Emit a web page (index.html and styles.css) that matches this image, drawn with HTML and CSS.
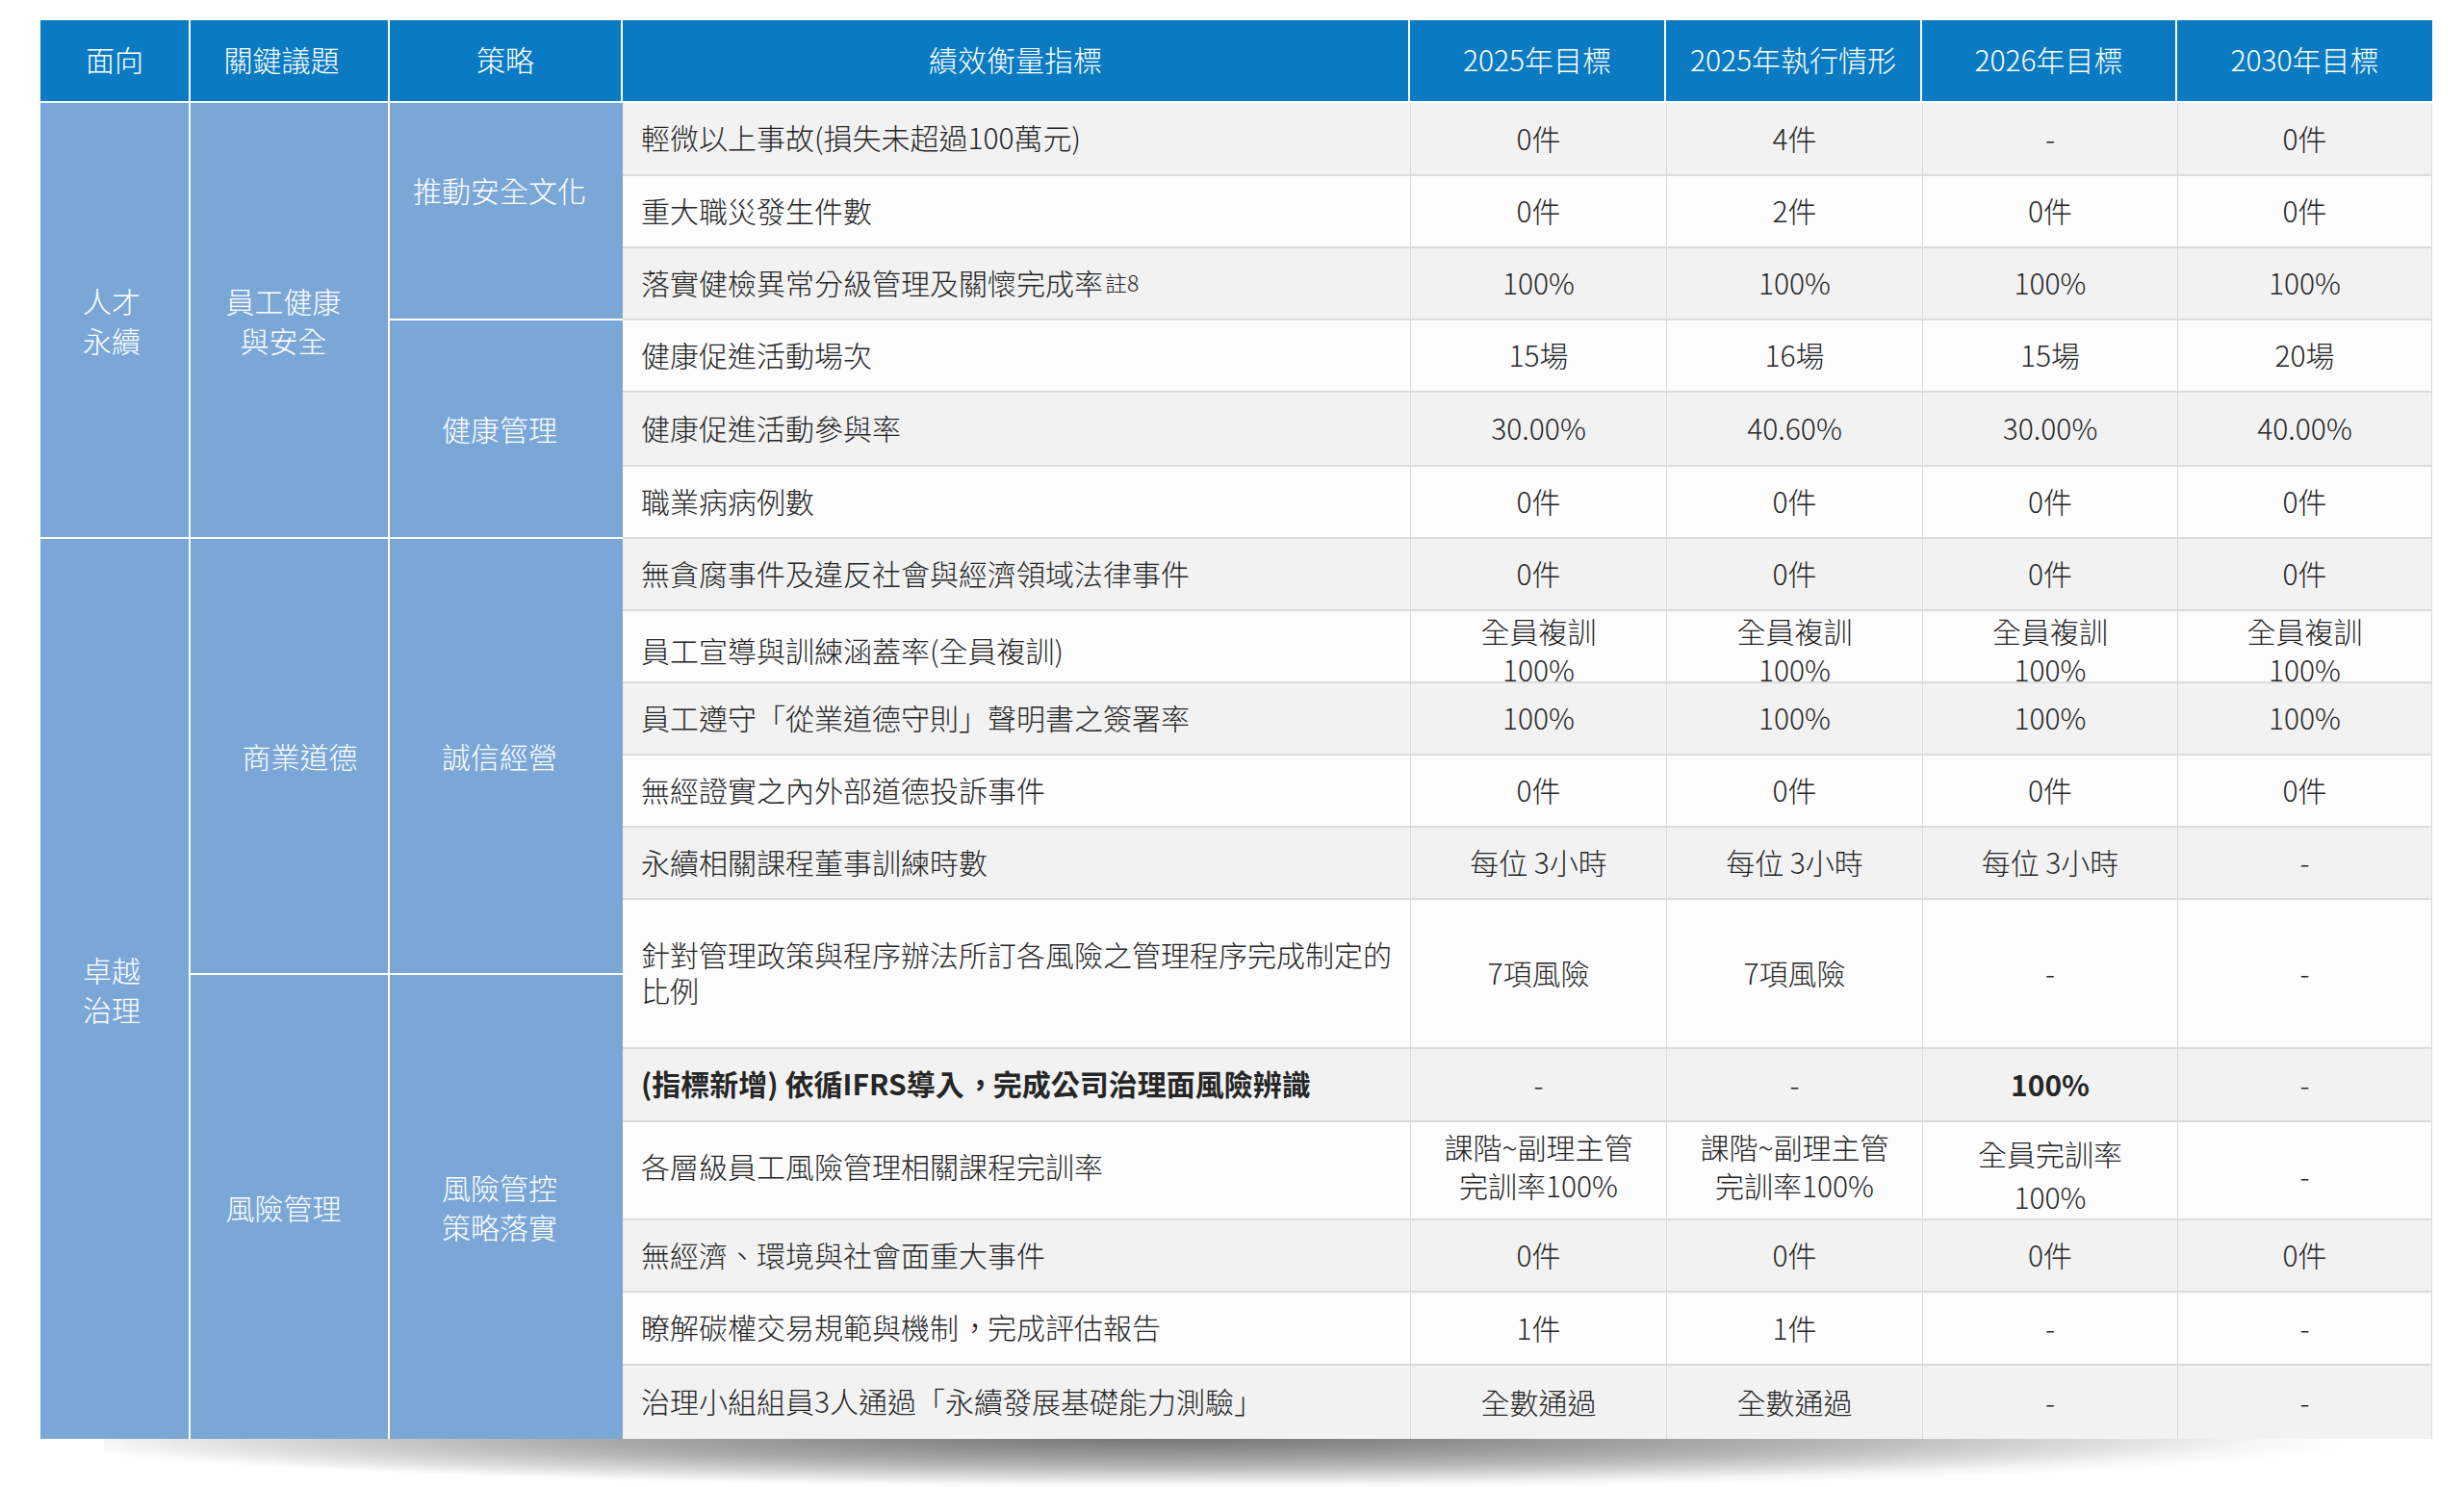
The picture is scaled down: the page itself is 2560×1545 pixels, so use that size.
FILE: index.html
```html
<!DOCTYPE html>
<html lang="zh-Hant">
<head>
<meta charset="utf-8">
<title>績效衡量指標</title>
<link rel="stylesheet" href="styles.css">
</head>
<body>
<div class="page">
  <div class="kpi">
    <div class="head">
      <div class="hc">面向</div>
      <div class="hc hc-shift">關鍵議題</div>
      <div class="hc">策略</div>
      <div class="hc">績效衡量指標</div>
      <div class="hc">2025年目標</div>
      <div class="hc">2025年執行情形</div>
      <div class="hc">2026年目標</div>
      <div class="hc last">2030年目標</div>
    </div>
    <div class="body">
      <div class="left">
        <div class="lc c1 top">人才<br>永續</div>
        <div class="lc c2 top">員工健康<br>與安全</div>
        <div class="lc c3 s1 lift">推動安全文化</div>
        <div class="lc c3 s2">健康管理</div>
        <div class="lc c1 bottom">卓越<br>治理</div>
        <div class="lc c2 s3 ethics">商業道德</div>
        <div class="lc c3 s3">誠信經營</div>
        <div class="lc c2 s4 end">風險管理</div>
        <div class="lc c3 s4 end">風險管控<br>策略落實</div>
      </div>
      <div class="right">
        <div class="row grey h76">
          <div class="ind">輕微以上事故(損失未超過100萬元)</div>
          <div class="val">0件</div><div class="val">4件</div><div class="val">-</div><div class="val">0件</div>
        </div>
        <div class="row white h75">
          <div class="ind">重大職災發生件數</div>
          <div class="val">0件</div><div class="val">2件</div><div class="val">0件</div><div class="val">0件</div>
        </div>
        <div class="row grey h75">
          <div class="ind">落實健檢異常分級管理及關懷完成率<sup class="note">註8</sup></div>
          <div class="val">100%</div><div class="val">100%</div><div class="val">100%</div><div class="val">100%</div>
        </div>
        <div class="row white h75">
          <div class="ind">健康促進活動場次</div>
          <div class="val">15場</div><div class="val">16場</div><div class="val">15場</div><div class="val">20場</div>
        </div>
        <div class="row grey h77">
          <div class="ind">健康促進活動參與率</div>
          <div class="val">30.00%</div><div class="val">40.60%</div><div class="val">30.00%</div><div class="val">40.00%</div>
        </div>
        <div class="row white h75">
          <div class="ind">職業病病例數</div>
          <div class="val">0件</div><div class="val">0件</div><div class="val">0件</div><div class="val">0件</div>
        </div>
        <div class="row grey h75">
          <div class="ind">無貪腐事件及違反社會與經濟領域法律事件</div>
          <div class="val">0件</div><div class="val">0件</div><div class="val">0件</div><div class="val">0件</div>
        </div>
        <div class="row white h75">
          <div class="ind">員工宣導與訓練涵蓋率(全員複訓)</div>
          <div class="val">全員複訓<br>100%</div><div class="val">全員複訓<br>100%</div><div class="val">全員複訓<br>100%</div><div class="val">全員複訓<br>100%</div>
        </div>
        <div class="row grey h75">
          <div class="ind">員工遵守「從業道德守則」聲明書之簽署率</div>
          <div class="val">100%</div><div class="val">100%</div><div class="val">100%</div><div class="val">100%</div>
        </div>
        <div class="row white h75">
          <div class="ind">無經證實之內外部道德投訴事件</div>
          <div class="val">0件</div><div class="val">0件</div><div class="val">0件</div><div class="val">0件</div>
        </div>
        <div class="row grey h75">
          <div class="ind">永續相關課程董事訓練時數</div>
          <div class="val">每位 3小時</div><div class="val">每位 3小時</div><div class="val">每位 3小時</div><div class="val">-</div>
        </div>
        <div class="row white h155">
          <div class="ind">針對管理政策與程序辦法所訂各風險之管理程序完成制定的比例</div>
          <div class="val">7項風險</div><div class="val">7項風險</div><div class="val">-</div><div class="val">-</div>
        </div>
        <div class="row grey h76 bold">
          <div class="ind">(指標新增) 依循IFRS導入<span class="cm">，</span>完成公司治理面風險辨識</div>
          <div class="val">-</div><div class="val">-</div><div class="val">100%</div><div class="val">-</div>
        </div>
        <div class="row white h102 raise">
          <div class="ind">各層級員工風險管理相關課程完訓率</div>
          <div class="val">課階~副理主管<br>完訓率100%</div><div class="val">課階~副理主管<br>完訓率100%</div><div class="val low wide">全員完訓率<br>100%</div><div class="val low">-</div>
        </div>
        <div class="row grey h75">
          <div class="ind">無經濟、環境與社會面重大事件</div>
          <div class="val">0件</div><div class="val">0件</div><div class="val">0件</div><div class="val">0件</div>
        </div>
        <div class="row white h76">
          <div class="ind">瞭解碳權交易規範與機制<span class="cm">，</span>完成評估報告</div>
          <div class="val">1件</div><div class="val">1件</div><div class="val">-</div><div class="val">-</div>
        </div>
        <div class="row grey h76 last-row">
          <div class="ind">治理小組組員3人通過「永續發展基礎能力測驗」</div>
          <div class="val">全數通過</div><div class="val">全數通過</div><div class="val">-</div><div class="val">-</div>
        </div>
      </div>
    </div>
  </div>
</div>
</body>
</html>
```

FILE: styles.css
```css
* { box-sizing: border-box; }

html, body {
  margin: 0;
  padding: 0;
  background: #ffffff;
}

body {
  font-family: "Noto Sans CJK TC", "Noto Sans", sans-serif;
  font-size: 30px;
  font-weight: 300;
  color: #262626;
  overflow: hidden;
}

.page {
  padding: 21px 0 0 42px;
  height: 1545px;
}

.kpi {
  position: relative;
  width: 2485px;
}

.kpi::after {
  content: "";
  position: absolute;
  top: 100%;
  left: 66px;
  right: 92px;
  height: 52px;
  background:
    radial-gradient(ellipse 50% 90% at 46% 0%,
      rgba(0, 0, 0, 0.38) 0%,
      rgba(0, 0, 0, 0.22) 45%,
      rgba(0, 0, 0, 0) 100%),
    radial-gradient(ellipse 51% 100% at 50% 0%,
      rgba(0, 0, 0, 0.26) 0%,
      rgba(0, 0, 0, 0.16) 55%,
      rgba(0, 0, 0, 0.06) 85%,
      rgba(0, 0, 0, 0) 100%);
}

/* header */
.head {
  display: grid;
  grid-template-columns: 156px 207px 242px 818px 266px 266px 265px 265px;
  height: 86px;
  border-bottom: 2px solid #ffffff;
}

.hc {
  background: #0a7bc2;
  color: #ffffff;
  display: flex;
  align-items: center;
  justify-content: center;
  border-right: 2px solid #ffffff;
  line-height: 1;
  padding-bottom: 5px;
}

.hc.hc-shift { padding-right: 16px; }
.hc.last { border-right: none; }

/* body */
.body {
  display: flex;
}

.left {
  display: grid;
  grid-template-columns: 156px 207px 242px;
  grid-template-rows: 226px 227px 453px 482px;
  flex: none;
}

.lc {
  background: #7ba7d7;
  color: #ffffff;
  display: flex;
  align-items: center;
  justify-content: center;
  text-align: center;
  line-height: 41px;
  border-bottom: 2px solid #ffffff;
}

.lc.c1 { grid-column: 1; border-right: 2px solid #ffffff; padding-right: 6px; }
.lc.c2 { grid-column: 2; border-right: 2px solid #ffffff; padding-right: 12px; }
.lc.c3 { grid-column: 3; padding-right: 14px; }

.lc.top { grid-row: 1 / 3; }
.lc.bottom { grid-row: 3 / 5; border-bottom: none; }
.lc.s1 { grid-row: 1; }
.lc.s2 { grid-row: 2; }
.lc.s3 { grid-row: 3; }
.lc.s4 { grid-row: 4; }
.lc.end { border-bottom: none; }
.lc.lift { padding-bottom: 44px; }
.lc.ethics { padding-left: 22px; padding-right: 0; }

.right {
  flex: 1;
}

.row {
  display: grid;
  grid-template-columns: 818px 266px 266px 265px 265px;
  border-bottom: 2px solid #dcdcdc;
}

.row.last-row { border-bottom: none; }

.row.grey { background: #f2f2f2; }
.row.white { background: #fcfcfc; }

.h75 { height: 75px; }
.h76 { height: 76px; }
.h77 { height: 77px; }
.h102 { height: 102px; }
.h155 { height: 155px; }

.ind {
  display: flex;
  align-items: center;
  padding: 0 12px 3px 19px;
  line-height: 37px;
}

.val {
  display: flex;
  align-items: center;
  justify-content: center;
  text-align: center;
  line-height: 40px;
  padding-bottom: 3px;
  border-left: 1px solid #d9d9d9;
}

.val:last-child { border-right: 1px solid #d9d9d9; }

.row.raise .ind,
.row.raise .val { padding-bottom: 10px; }
.row.raise .val.low { padding-top: 10px; padding-bottom: 0; }
.val.wide { line-height: 45px; }

.row.bold .ind,
.row.bold .val:nth-child(4) { font-weight: 700; }

/* Taiwan-style centred full-width comma */
.cm {
  margin-left: 0.06em;
  letter-spacing: -0.06em;
  vertical-align: 0.24em;
}

.note {
  font-size: 23px;
  line-height: 1;
  vertical-align: 9px;
  margin-left: 2px;
}
```
